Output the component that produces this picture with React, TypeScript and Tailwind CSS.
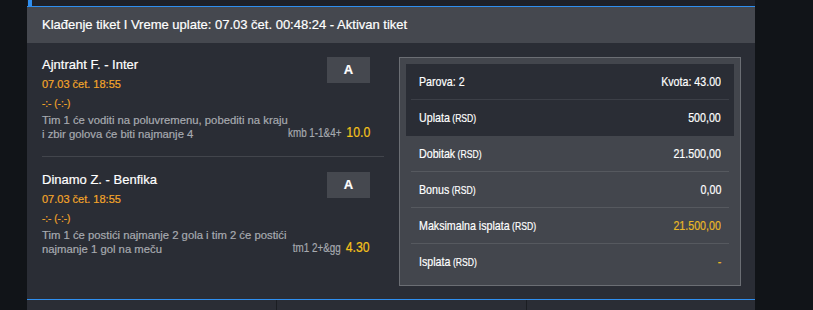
import React from "react";

const sans = "font-['Liberation_Sans',Arial,sans-serif] [-webkit-text-stroke:0.2px]";

interface Match {
  title: string;
  date: string;
  score: string;
  desc: string;
  pick: string;
  odds: string;
}

const matches: Match[] = [
  {
    title: "Ajntraht F. - Inter",
    date: "07.03 čet. 18:55",
    score: "-:- (-:-)",
    desc: "Tim 1 će voditi na poluvremenu, pobediti na kraju i zbir golova će biti najmanje 4",
    pick: "kmb 1-1&4+",
    odds: "10.0",
  },
  {
    title: "Dinamo Z. - Benfika",
    date: "07.03 čet. 18:55",
    score: "-:- (-:-)",
    desc: "Tim 1 će postići najmanje 2 gola i tim 2 će postići najmanje 1 gol na meču",
    pick: "tm1 2+&gg",
    odds: "4.30",
  },
];

// condensed look: no narrow face is installed, so squeeze the glyphs
function Narrow({
  children,
  right,
  className = "",
}: {
  children: React.ReactNode;
  right?: boolean;
  className?: string;
}) {
  return (
    <span
      className={`inline-block whitespace-nowrap scale-x-[0.82] ${
        right ? "origin-right" : "origin-left"
      } ${className}`}
    >
      {children}
    </span>
  );
}

function MatchRow({ m }: { m: Match }) {
  return (
    <div className="flex justify-between pr-[14px]">
      <div>
        <div className="text-[13px] leading-[16px] text-white">{m.title}</div>
        <div className="mt-[3px] text-[11px] leading-[17px] text-[#f4a62a]">{m.date}</div>
        <div className="mt-[2px] text-[10px] leading-[17px] text-[#f4a62a]">{m.score}</div>
        <div className="mt-[2px] w-[248px] text-[11.3px] leading-[13.5px] text-[#a7aab0]">
          {m.desc}
        </div>
      </div>
      <div className="flex w-[43px] shrink-0 flex-col justify-between">
        <div className="flex h-[26px] w-[43px] items-center justify-center bg-[#45484f] text-[13px] font-bold text-white">
          A
        </div>
        <div className="flex w-[43px] justify-end">
          <Narrow right className="text-[12px] leading-[16px] text-[#a7aab0]">
            {m.pick}
            <span className="ml-[6px] text-[15px] text-[#f5c21b]">{m.odds}</span>
          </Narrow>
        </div>
      </div>
    </div>
  );
}

function SumRow({
  label,
  value,
  rsd,
  valueClass = "text-white",
  last,
  dark,
  h = "h-[36px]",
}: {
  label: string;
  value: string;
  rsd?: boolean;
  valueClass?: string;
  last?: boolean;
  dark?: boolean;
  h?: string;
}) {
  return (
    <div
      className={`flex ${h} items-center justify-between px-2 ${
        last ? "" : dark ? "border-b border-[#3c3f47]" : "border-b border-[#56595f]"
      }`}
    >
      <Narrow className="text-[13px] text-white">
        {label}
        {rsd && <span className="ml-[3px] text-[10.5px]">(RSD)</span>}
      </Narrow>
      <Narrow right className={`text-[13px] ${valueClass}`}>
        {value}
      </Narrow>
    </div>
  );
}

export default function App() {
  return (
    <div className={`flex h-[310px] w-[813px] overflow-hidden bg-[#111418] ${sans}`}>
      <div className="w-[27px] shrink-0" />
      <div className="flex w-[728px] shrink-0 flex-col bg-[#2a2d35]">
        <div className="flex h-[6px]">
          <div className="w-px bg-[#1a1d22]" />
          <div className="w-[4px] bg-[#2f8ff0]" />
          <div className="flex-1 bg-[#1e2129]" />
        </div>
        <div className="h-px bg-[#2f8ff0]" />
        <div className="flex h-[36px] items-center bg-[#45484f] px-[15px] text-[13px] text-white">
          Klađenje tiket I Vreme uplate: 07.03 čet. 00:48:24 - Aktivan tiket
        </div>

        <div className="flex h-[256px]">
          <div className="w-[357px] pl-[15px] pt-[14px]">
            <MatchRow m={matches[0]} />
            <div className="my-[15px] h-px bg-[#42454c]" />
            <MatchRow m={matches[1]} />
          </div>

          <div className="ml-[15px] mt-[14px] h-[229px] w-[342px] border border-[#6b6e74] bg-[#43464d] p-[6px]">
            <div className="bg-[#2a2d35] px-[5px]">
              <SumRow dark label="Parova: 2" value="Kvota: 43.00" />
              <SumRow dark last label="Uplata" rsd value="500,00" />
            </div>
            <div className="px-[5px]">
              <SumRow label="Dobitak" rsd value="21.500,00" />
              <SumRow label="Bonus" rsd value="0,00" />
              <SumRow label="Maksimalna isplata" rsd value="21.500,00" valueClass="text-[#eab925]" />
              <SumRow last h="h-[35px]" label="Isplata" rsd value="-" valueClass="text-[#eab925]" />
            </div>
          </div>
        </div>

        <div className="h-px bg-[#2f8ff0]" />
        <div className="flex flex-1">
          <div className="w-[250px] border-r border-[#1b1e23]" />
          <div className="w-[250px] border-r border-[#1b1e23]" />
          <div className="flex-1" />
        </div>
      </div>
    </div>
  );
}
